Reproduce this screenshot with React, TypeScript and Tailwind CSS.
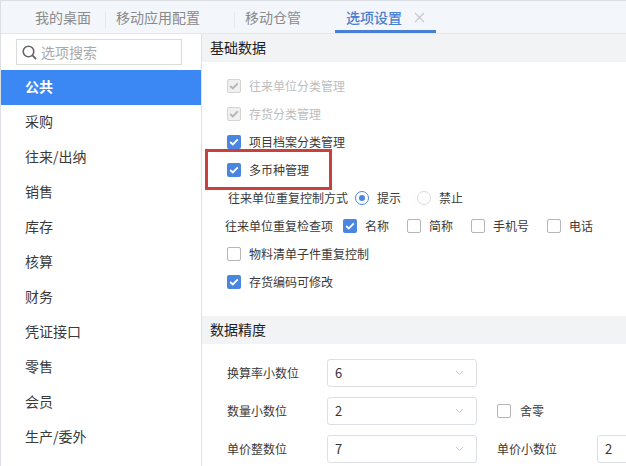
import React from "react";

const font = { fontFamily: '"Noto Sans CJK SC", "Liberation Sans", sans-serif' };

function Check({ on, disabled }: { on?: boolean; disabled?: boolean }) {
  if (disabled)
    return (
      <span className="flex h-[14px] w-[14px] shrink-0 items-center justify-center rounded-[2px] border border-[#d4d4d4] bg-[#f0f0f0]">
        <svg width="10" height="8" viewBox="0 0 10 8" fill="none">
          <path d="M1.2 4 L3.8 6.4 L8.8 1.4" stroke="#b4b4b4" strokeWidth="1.8" />
        </svg>
      </span>
    );
  if (on)
    return (
      <span className="flex h-[14px] w-[14px] shrink-0 items-center justify-center rounded-[2px] bg-[#4a86e0]">
        <svg width="10" height="8" viewBox="0 0 10 8" fill="none">
          <path d="M1.2 4 L3.8 6.4 L8.8 1.4" stroke="#fff" strokeWidth="1.8" />
        </svg>
      </span>
    );
  return <span className="h-[14px] w-[14px] shrink-0 rounded-[2px] border border-[#b5b5b5] bg-white" />;
}

function Row({ label, on, disabled }: { label: string; on?: boolean; disabled?: boolean }) {
  return (
    <div className="flex h-[28px] items-center pl-[25px]">
      <Check on={on} disabled={disabled} />
      <span className={`ml-[8px] text-[12px] ${disabled ? "text-[#bdbdbd]" : "text-[#3a3a3a]"}`}>{label}</span>
    </div>
  );
}

function Select({ value }: { value: string }) {
  return (
    <div className="flex h-[28px] w-[150px] shrink-0 items-center justify-between rounded-[3px] border border-[#dcdfe6] bg-white pl-[7px] pr-[12px]">
      <span className="text-[13px] text-[#333]">{value}</span>
      <svg width="9" height="6" viewBox="0 0 9 6" fill="none">
        <path d="M1 1 L4.5 4.5 L8 1" stroke="#c4c8cf" strokeWidth="1" />
      </svg>
    </div>
  );
}

const menu = ["采购", "往来/出纳", "销售", "库存", "核算", "财务", "凭证接口", "零售", "会员", "生产/委外"];

export default function App() {
  return (
    <div style={font} className="relative h-[466px] w-[626px] overflow-hidden border-l border-t border-[#dcdfe3] bg-white">
      {/* tabs */}
      <div className="flex h-[33px] items-center border-b border-[#e3e6ea] bg-[#f3f7fc] text-[14px] text-[#8a8a8a]">
        <div className="ml-[34px] w-[70px] pt-[1px]">我的桌面</div>
        <span className="mt-[5px] h-[16px] w-px bg-[#e6e9ed]" />
        <div className="ml-[10px] w-[118px] pt-[1px]">移动应用配置</div>
        <span className="mt-[5px] h-[16px] w-px bg-[#e6e9ed]" />
        <div className="ml-[10px] w-[90px] pt-[1px]">移动仓管</div>
        <div className="flex h-[32px] w-[101px] items-center border-b-[3px] border-[#4a80d4] pl-[11px] pt-[3px]">
          <span className="font-medium text-[#4a7fd0]">选项设置</span>
          <svg className="ml-[12px]" width="11" height="11" viewBox="0 0 11 11" fill="none">
            <path d="M1 1 L10 10 M10 1 L1 10" stroke="#c6c8cc" strokeWidth="1.2" />
          </svg>
        </div>
      </div>
      <div className="flex h-[432px]">
        {/* sidebar */}
        <div className="w-[201px] shrink-0 border-r border-[#dfe1e5] bg-white text-[14px]">
          <div className="px-[15px] pt-[5px]">
            <div className="flex h-[26px] w-[166px] items-center border border-[#d9dcdf] pl-[4px]">
              <svg width="17" height="17" viewBox="0 0 17 17" fill="none">
                <circle cx="7.5" cy="7.5" r="5.3" stroke="#666" strokeWidth="1.6" />
                <path d="M11.4 11.4 L15 15" stroke="#666" strokeWidth="1.8" />
              </svg>
              <span className="ml-[3px] text-[#a9a9a9]">选项搜索</span>
            </div>
          </div>
          <div className="mt-[5px] flex h-[35px] items-center bg-[#3b88f5] pb-[2px] pl-[24px] font-bold text-white">公共</div>
          {menu.map((m) => (
            <div key={m} className="flex h-[35px] items-center pb-[2px] pl-[24px] text-[#3a3a3a]">{m}</div>
          ))}
        </div>
        {/* content */}
        <div className="min-w-0 flex-1">
          <div className="flex h-[28px] items-center bg-[#f2f3f5] pb-[1px] pl-[8px] text-[14px] text-[#222]">基础数据</div>
          <div className="pt-[10px]">
            <Row label="往来单位分类管理" disabled />
            <Row label="存货分类管理" disabled />
            <Row label="项目档案分类管理" on />
            <Row label="多币种管理" on />
            <div className="flex h-[28px] items-center pl-[26px] text-[12px] text-[#3a3a3a]">
              <span className="w-[127px] shrink-0">往来单位重复控制方式</span>
              <span className="flex h-[14px] w-[14px] shrink-0 items-center justify-center rounded-full border border-[#4a86e0]">
                <span className="h-[6px] w-[6px] rounded-full bg-[#4a86e0]" />
              </span>
              <span className="ml-[8px] w-[40px] shrink-0">提示</span>
              <span className="h-[14px] w-[14px] shrink-0 rounded-full border border-[#dcdcdc]" />
              <span className="ml-[8px]">禁止</span>
            </div>
            <div className="flex h-[28px] items-center pl-[23px] text-[12px] text-[#3a3a3a]">
              <span className="w-[118px] shrink-0">往来单位重复检查项</span>
              <Check on />
              <span className="ml-[8px] w-[42px] shrink-0">名称</span>
              <Check />
              <span className="ml-[8px] w-[42px] shrink-0">简称</span>
              <Check />
              <span className="ml-[8px] w-[54px] shrink-0">手机号</span>
              <Check />
              <span className="ml-[8px]">电话</span>
            </div>
            <Row label="物料清单子件重复控制" />
            <Row label="存货编码可修改" on />
          </div>
          <div className="mt-[20px] flex h-[28px] items-center bg-[#f2f3f5] pb-[1px] pl-[8px] text-[14px] text-[#222]">数据精度</div>
          <div className="pl-[25px] pt-[15px] text-[12px] text-[#3a3a3a]">
            <div className="flex items-center">
              <span className="w-[100px] shrink-0">换算率小数位</span>
              <Select value="6" />
            </div>
            <div className="mt-[10px] flex items-center">
              <span className="w-[100px] shrink-0">数量小数位</span>
              <Select value="2" />
              <span className="ml-[20px] flex"><Check /></span>
              <span className="ml-[9px]">舍零</span>
            </div>
            <div className="mt-[10px] flex items-center">
              <span className="w-[100px] shrink-0">单价整数位</span>
              <Select value="7" />
              <span className="ml-[20px] w-[100px] shrink-0">单价小数位</span>
              <Select value="2" />
            </div>
          </div>
        </div>
      </div>
      {/* red annotation */}
      <div className="absolute left-[204px] top-[148px] h-[41px] w-[127px] border-[3px] border-[#c9403f]" />
    </div>
  );
}
